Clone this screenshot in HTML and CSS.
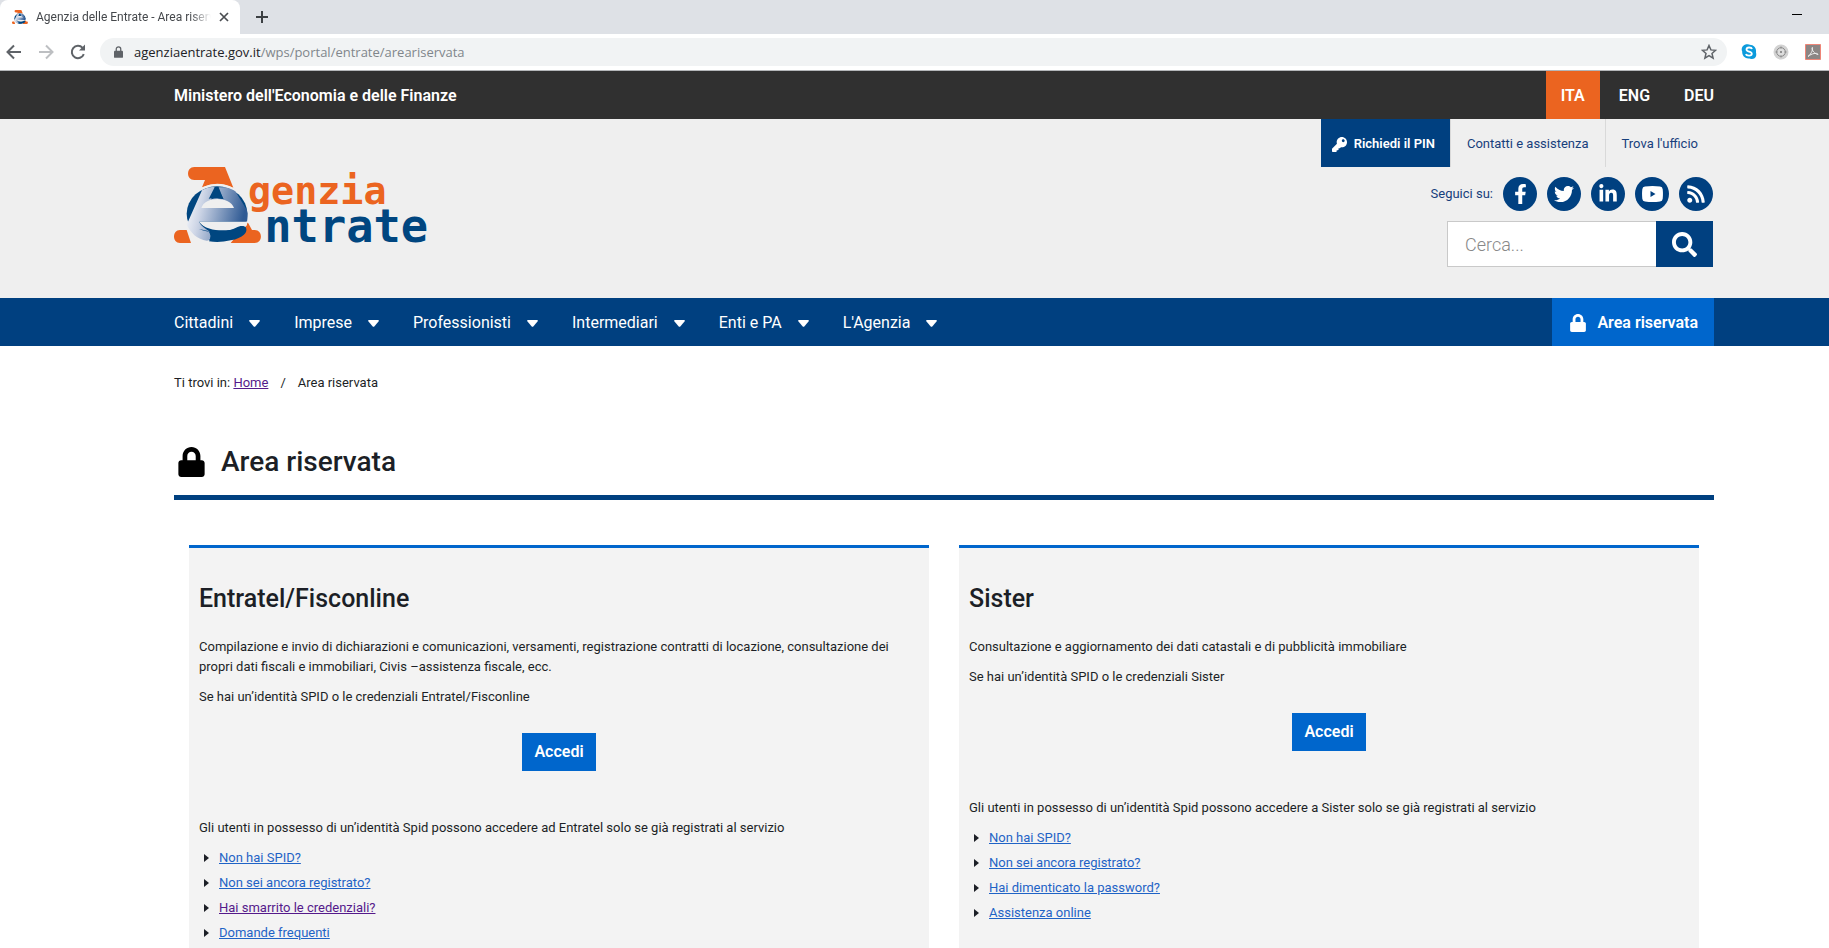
FILE: index.html
```html
<!DOCTYPE html>
<html lang="it">
<head>
<meta charset="utf-8">
<meta name="viewport" content="width=device-width, initial-scale=1">
<title>Agenzia delle Entrate - Area riservata</title>
<link rel="stylesheet" href="styles.css">
</head>
<body>
<svg class="defs" aria-hidden="true">
  <defs>
    <linearGradient id="shine" x1="0" y1="0" x2="1" y2="0.2">
      <stop offset="0" stop-color="#ffffff"/>
      <stop offset="0.3" stop-color="#cdd5e6"/>
      <stop offset="1" stop-color="#2f5a94"/>
    </linearGradient>
    <symbol id="mark" viewBox="42 51 262 228">
      <path fill="#eb6420" d="M103 51H195L220 113Q172 90 126 112L135 90H103C78 90 78 51 103 51Z"/>
      <path fill="#eb6420" d="M60 240H80L93 279H60C36 279 36 240 60 240ZM226 218H264L276 240H284C309 240 309 279 284 279H212L226 262Z"/>
      <ellipse cx="172" cy="190" rx="96" ry="88" fill="#efefef"/>
      <ellipse cx="171" cy="191" rx="91" ry="82" fill="#004680"/>
      <path fill="url(#shine)" d="M126 121C144 111 155 110 164 112L146 147C158 141 180 145 190 147L176 112C202 110 215 117 226 124L261 181C264 193 263 205 261 215H117C125 232 145 239 152 248C155 262 149 273 140 272C112 268 92 249 80 224Z"/>
      <path fill="#efefef" d="M124 174C134 138 210 138 222 174Z"/>
      <path fill="#004680" d="M172 112L191 148Q172 142 153 148Z"/>
      <path fill="#efefef" d="M117 215H262L259 228C246 226 236 234 226 237C197 243 140 246 117 215Z"/>
      <path fill="#004680" d="M117 237C145 251 198 249 228 233C239 227 249 226 257 231C266 246 249 265 212 271Q178 279 147 274Q157 257 145 243Z"/>
    </symbol>
    <symbol id="lock" viewBox="0 0 448 512"><path d="M400 224h-24v-72C376 68.200 307.800 0 224 0S72 68.200 72 152v72H48c-26.500 0-48 21.500-48 48v192c0 26.500 21.500 48 48 48h352c26.500 0 48-21.500 48-48V272c0-26.500-21.500-48-48-48zm-104 0H152v-72c0-39.700 32.300-72 72-72s72 32.300 72 72v72z"/></symbol>
    <symbol id="caret" viewBox="0 0 11 7"><path d="M1 0h9q1.500 0.300 0.500 1.500L6.500 6.200q-1 1-2 0L0.500 1.500Q-0.500 0.300 1 0z"/></symbol>
  </defs>
</svg>

<div class="browser">
  <div class="tabs">
    <div class="tab">
      <svg class="favicon" aria-hidden="true"><use href="#mark"/></svg>
      <span class="tab-title">Agenzia delle Entrate - Area riservata</span>
      <button class="tab-close" type="button" aria-label="Chiudi scheda"><svg viewBox="0 0 10 10" width="10" height="10"><path d="M1 1l8 8M9 1l-8 8" stroke="#4a4d51" stroke-width="1.700"/></svg></button>
    </div>
    <button class="tab-new" type="button" aria-label="Nuova scheda"><svg viewBox="0 0 12 12" width="12" height="12"><path d="M6 0v12M0 6h12" stroke="#3c4043" stroke-width="2"/></svg></button>
    <button class="minimize" type="button" aria-label="Riduci a icona"><svg viewBox="0 0 10 1" width="10" height="1"><path d="M0 0h10v1H0z" fill="#000"/></svg></button>
  </div>
  <div class="toolbar">
    <button type="button" aria-label="Indietro"><svg viewBox="0 0 16 16" width="16" height="16"><path d="M15 8H2M8 1.500L1.500 8 8 14.500" fill="none" stroke="#5f6368" stroke-width="2"/></svg></button>
    <button type="button" aria-label="Avanti"><svg viewBox="0 0 16 16" width="16" height="16"><path d="M1 8h13M8 1.500L14.500 8 8 14.500" fill="none" stroke="#bdbfc2" stroke-width="2"/></svg></button>
    <button type="button" aria-label="Ricarica"><svg viewBox="0 0 16 16" width="16" height="16"><path d="M13.800 10.200A6.200 6.200 0 1 1 12.600 3.800" fill="none" stroke="#5f6368" stroke-width="2"/><path d="M15 0.500v6H9z" fill="#5f6368"/></svg></button>
    <div class="address">
      <svg class="address-lock" viewBox="0 0 10 13" width="9" height="12" aria-hidden="true"><path d="M1 5h8q1 0 1 1v6q0 1-1 1H1q-1 0-1-1V6q0-1 1-1z" fill="#5f6368"/><path d="M2.500 6V3.200a2.500 2.500 0 0 1 5 0V6" fill="none" stroke="#5f6368" stroke-width="1.400"/></svg>
      <div class="url" role="textbox" contenteditable="true" spellcheck="false" aria-label="Indirizzo"><span class="url-host">agenziaentrate.gov.it</span>/wps/portal/entrate/areariservata</div>
      <button type="button" aria-label="Aggiungi ai preferiti"><svg viewBox="0 0 16 16" width="16" height="16"><path d="M8 1.500l1.900 4.400 4.700.4-3.600 3.100 1.100 4.700L8 11.600l-4.100 2.500L5 9.400 1.400 6.300l4.700-.4z" fill="none" stroke="#5f6368" stroke-width="1.500"/></svg></button>
    </div>
    <div class="extensions">
      <button type="button" aria-label="Skype"><svg viewBox="0 0 16 16" width="16" height="16"><path d="M4.500 0.500C7 0 8 1 10 1c4 0.500 5.500 4 5 7.500 1 3-0.500 6.500-4 6.500-1.500 0-2-0.500-3.500-0.500C3 14 1 11 1.200 7.500 0 5 1 1.500 4.500 0.500z" fill="#0c9bdc"/><path d="M11 5C10.500 3 5.500 2.800 5.500 5.500 5.500 8.200 10.800 7 10.800 9.700 10.800 12.300 5.500 12 5 10" fill="none" stroke="#fff" stroke-width="1.800"/></svg></button>
      <button type="button" aria-label="Estensione"><svg viewBox="0 0 16 16" width="16" height="16"><circle cx="8" cy="8" r="7.500" fill="#d2d2d2"/><circle cx="8" cy="8" r="4.300" fill="#ddd" stroke="#8a8a8a"/><circle cx="8" cy="8" r="1" fill="#777"/><path d="M8 2.500v2M8 11.500v2M2.500 8h2M11.500 8h2" stroke="#8a8a8a"/></svg></button>
      <button type="button" aria-label="Adobe Acrobat"><svg viewBox="0 0 16 16" width="16" height="16"><path d="M.5.500h15v15H.5z" fill="#8b8584" stroke="#ee8577"/><path d="M3 12.500C5 11 8 7 7.500 3.500 6 3 7.500 9.500 13 10.500 13 8.500 7 9 3 12.500z" fill="none" stroke="#eee"/></svg></button>
    </div>
  </div>
</div>

<div class="ministry">
  <div class="wrap bar">
    <a class="ministry-name" href="#">Ministero dell'Economia e delle Finanze</a>
    <nav class="langs" aria-label="Lingua"><a class="lang-active" href="#">ITA</a><a href="#">ENG</a><a href="#">DEU</a></nav>
  </div>
</div>

<header class="header">
  <div class="wrap header-row">
    <a class="logo" href="#" aria-label="Agenzia Entrate">
      <svg viewBox="42 51 756 228" width="252" height="76">
        <use href="#mark" x="42" y="51" width="262" height="228"/>
        <text class="logo-text logo-top" x="264" y="163">genzia</text>
        <text class="logo-text logo-bottom" x="313" y="277">ntrate</text>
      </svg>
    </a>
    <div class="tools">
      <nav class="quick" aria-label="Servizi">
        <a class="pin" href="#"><svg viewBox="0 0 512 512" width="15" height="15" fill="currentColor" aria-hidden="true"><path d="M512 176.001C512 273.203 433.202 352 336 352c-11.220 0-22.190-1.062-32.827-3.069l-24.012 27.014A23.999 23.999 0 0 1 261.223 384H224v40c0 13.255-10.745 24-24 24h-40v40c0 13.255-10.745 24-24 24H24c-13.255 0-24-10.745-24-24v-78.059c0-6.365 2.529-12.470 7.029-16.971l161.802-161.802C163.108 213.814 160 195.271 160 176 160 78.798 238.797.001 335.999 0 433.488-.001 512 78.511 512 176.001zM336 128c0 26.510 21.490 48 48 48s48-21.490 48-48-21.490-48-48-48-48 21.490-48 48z"/></svg>Richiedi il PIN</a>
        <a href="#">Contatti e assistenza</a>
        <a href="#">Trova l'ufficio</a>
      </nav>
      <div class="social">
        <span>Seguici su:</span>
        <a href="#" aria-label="Facebook"><svg viewBox="0 0 320 512" width="13" height="20"><path d="M279.140 288l14.220-92.660h-88.910v-60.130c0-25.350 12.420-50.060 52.240-50.060h40.420V6.260S260.430 0 225.360 0c-73.220 0-121.080 44.380-121.080 124.720v70.620H22.890V288h81.390v224h100.170V288z"/></svg></a>
        <a href="#" aria-label="Twitter"><svg viewBox="0 0 512 512" width="20" height="20"><path d="M459.370 151.716c.325 4.548.325 9.097.325 13.645 0 138.720-105.583 298.558-298.558 298.558-59.452 0-114.680-17.219-161.137-47.106 8.447.974 16.568 1.299 25.340 1.299 49.055 0 94.213-16.568 130.274-44.832-46.132-.975-84.792-31.188-98.112-72.772 6.498.974 12.995 1.624 19.818 1.624 9.421 0 18.843-1.300 27.614-3.573-48.081-9.747-84.143-51.980-84.143-102.985v-1.299c13.969 7.797 30.214 12.670 47.431 13.319-28.264-18.843-46.781-51.005-46.781-87.391 0-19.492 5.197-37.360 14.294-52.954 51.655 63.675 129.300 105.258 216.365 109.807-1.624-7.797-2.599-15.918-2.599-24.040 0-57.828 46.782-104.934 104.934-104.934 30.213 0 57.502 12.670 76.670 33.137 23.715-4.548 46.456-13.320 66.599-25.340-7.798 24.366-24.366 44.833-46.132 57.827 21.117-2.273 41.584-8.122 60.426-16.243-14.292 20.791-32.161 39.308-52.628 54.253z"/></svg></a>
        <a href="#" aria-label="LinkedIn"><svg viewBox="0 0 448 512" width="18" height="20"><path d="M100.280 448H7.400V148.900h92.880zM53.790 108.100C24.090 108.100 0 83.500 0 53.800a53.790 53.790 0 0 1 107.580 0c0 29.700-24.100 54.300-53.790 54.300zM447.900 448h-92.680V302.400c0-34.700-.7-79.200-48.290-79.200-48.290 0-55.690 37.700-55.690 76.700V448h-92.780V148.900h89.080v40.800h1.300c12.400-23.500 42.690-48.300 87.880-48.300 94 0 111.280 61.900 111.280 142.300V448z"/></svg></a>
        <a href="#" aria-label="YouTube"><svg viewBox="0 0 21 16" width="21" height="16"><path fill-rule="evenodd" d="M3 .5Q10.500-.5 18 .5q2.500.3 2.700 2.700.5 4.800 0 9.600-.2 2.400-2.700 2.700-7.500 1-15 0Q.5 15.200.3 12.800q-.5-4.800 0-9.600Q.5.800 3 .5zM8.500 5v6l5-3z"/></svg></a>
        <a href="#" aria-label="RSS"><svg viewBox="0 0 448 512" width="18" height="20"><path d="M128.081 415.959c0 35.369-28.672 64.041-64.041 64.041S0 451.328 0 415.959s28.672-64.041 64.041-64.041 64.040 28.673 64.040 64.041zm175.660 47.250c-8.354-154.600-132.185-278.587-286.950-286.950C7.656 175.765 0 183.105 0 192.253v48.069c0 8.415 6.490 15.472 14.887 16.018 111.832 7.284 201.473 96.702 208.772 208.772.547 8.397 7.604 14.887 16.018 14.887h48.069c9.149.001 16.489-7.655 15.995-16.790zm144.249.288C439.596 229.677 251.465 40.445 16.503 32.010 7.473 31.686 0 38.981 0 48.016v48.068c0 8.625 6.835 15.645 15.453 15.999 191.179 7.839 344.627 161.316 352.465 352.465.353 8.618 7.373 15.453 15.999 15.453h48.068c9.034-.001 16.329-7.474 16.005-16.504z"/></svg></a>
      </div>
      <form class="search">
        <input type="search" placeholder="Cerca..." aria-label="Cerca">
        <button type="button" aria-label="Avvia ricerca"><svg viewBox="0 0 512 512" width="25" height="25" fill="#fff"><path d="M505 442.700L405.300 343c-4.500-4.500-10.600-7-17-7H372c27.600-35.300 44-79.700 44-128C416 93.100 322.900 0 208 0S0 93.100 0 208s93.100 208 208 208c48.300 0 92.700-16.400 128-44v16.300c0 6.400 2.500 12.500 7 17l99.700 99.700c9.400 9.400 24.600 9.400 33.900 0l28.300-28.300c9.400-9.400 9.400-24.600.1-34zM208 336c-70.700 0-128-57.200-128-128 0-70.700 57.200-128 128-128 70.700 0 128 57.200 128 128 0 70.700-57.200 128-128 128z"/></svg></button>
      </form>
    </div>
  </div>
</header>

<div class="mainnav">
  <div class="wrap bar">
    <nav class="menu" aria-label="Menu principale">
      <button type="button">Cittadini<svg class="caret"><use href="#caret"/></svg></button>
      <button type="button">Imprese<svg class="caret"><use href="#caret"/></svg></button>
      <button type="button">Professionisti<svg class="caret"><use href="#caret"/></svg></button>
      <button type="button">Intermediari<svg class="caret"><use href="#caret"/></svg></button>
      <button type="button">Enti e PA<svg class="caret"><use href="#caret"/></svg></button>
      <button type="button">L'Agenzia<svg class="caret"><use href="#caret"/></svg></button>
    </nav>
    <a class="reserved" href="#"><svg width="16" height="18" aria-hidden="true"><use href="#lock"/></svg>Area riservata</a>
  </div>
</div>

<main class="wrap">
  <nav class="crumbs" aria-label="Percorso">Ti trovi in: <a class="visited" href="#">Home</a><span class="slash">/</span>Area riservata</nav>
  <h1 class="title"><svg width="27" height="30" aria-hidden="true"><use href="#lock"/></svg>Area riservata</h1>
  <div class="cards">
    <section class="card">
      <h2>Entratel/Fisconline</h2>
      <p>Compilazione e invio di dichiarazioni e comunicazioni, versamenti, registrazione contratti di locazione, consultazione dei propri dati fiscali e immobiliari, Civis –assistenza fiscale, ecc.</p>
      <p>Se hai un’identità SPID o le credenziali Entratel/Fisconline</p>
      <a class="login" href="#">Accedi</a>
      <p>Gli utenti in possesso di un’identità Spid possono accedere ad Entratel solo se già registrati al servizio</p>
      <ul>
        <li><a href="#">Non hai SPID?</a></li>
        <li><a href="#">Non sei ancora registrato?</a></li>
        <li><a class="visited" href="#">Hai smarrito le credenziali?</a></li>
        <li><a href="#">Domande frequenti</a></li>
      </ul>
    </section>
    <section class="card">
      <h2>Sister</h2>
      <p>Consultazione e aggiornamento dei dati catastali e di pubblicità immobiliare</p>
      <p>Se hai un’identità SPID o le credenziali Sister</p>
      <a class="login" href="#">Accedi</a>
      <p>Gli utenti in possesso di un’identità Spid possono accedere a Sister solo se già registrati al servizio</p>
      <ul>
        <li><a href="#">Non hai SPID?</a></li>
        <li><a href="#">Non sei ancora registrato?</a></li>
        <li><a href="#">Hai dimenticato la password?</a></li>
        <li><a href="#">Assistenza online</a></li>
      </ul>
    </section>
  </div>
</main>
</body>
</html>
```
FILE: styles.css
```css
* { box-sizing: border-box; }
html { overflow: hidden; }
body {
  margin: 0;
  background: #fff;
  color: #1c1f26;
  font: 13px/20px Roboto, "Open Sans", sans-serif;
  height: 100vh;
  overflow: hidden;
}
a { color: inherit; text-decoration: none; }
button { border: 0; padding: 0; background: none; font: inherit; color: inherit; }
svg { display: block; flex: none; }
.defs { position: absolute; width: 0; height: 0; }
.wrap { padding: 0 115px 0 174px; }
.bar { display: flex; justify-content: space-between; height: 48px; align-items: stretch; }

/* Browser window */
.browser { font-size: 12px; border-bottom: 1px solid #b4b6b9; }
.tabs { display: flex; height: 34px; background: #dee1e6; align-items: center; padding-right: 27px; }
.tab { display: flex; align-items: center; width: 240px; height: 34px; padding: 0 11px 0 12px; background: #fff; border-radius: 8px 8px 0 0; }
.favicon { width: 16px; height: 14px; margin-right: 8px; }
.tab-title {
  flex: 1; overflow: hidden; white-space: nowrap; color: #45484c;
  -webkit-mask-image: linear-gradient(to right, #000 88%, transparent);
  mask-image: linear-gradient(to right, #000 88%, transparent);
}
.tab-close { margin-left: 8px; }
.tab-new { margin-left: 16px; }
.minimize { margin-left: auto; padding-bottom: 6px; }
.toolbar { display: flex; align-items: center; gap: 16px; height: 36px; padding: 0 8px 0 6px; }
.address { flex: 1; display: flex; align-items: center; height: 28px; margin-left: -2px; padding: 0 10px 0 14px; border-radius: 14px; background: #f1f3f4; }
.url { flex: 1; margin-left: 11px; font-family: "Open Sans", sans-serif; font-size: 13px; color: #80868b; outline: 0; }
.url-host { color: #202124; }
.extensions { display: flex; gap: 16px; margin-left: -2px; }

/* Ministry bar */
.ministry { background: #303030; color: #fff; font-size: 16px; font-weight: 600; }
.ministry-name { align-self: center; padding-top: 2px; }
.langs { display: flex; gap: 4px; }
.langs a { display: flex; align-items: center; padding: 2px 15px 0; }
.langs .lang-active { background: #eb6420; }
.langs a:last-child { padding-right: 0; }

/* Header */
.header { background: #efefef; color: #17407c; }
.header-row { display: flex; justify-content: space-between; height: 179px; }
.logo { padding-top: 48px; }
.logo svg { overflow: visible; }
.logo-text { font-family: "DejaVu Sans Mono", "Liberation Mono", monospace; font-weight: 700; }
.logo-top { font-size: 115px; fill: #eb6420; }
.logo-bottom { font-size: 136px; fill: #004680; }
.tools { display: flex; flex-direction: column; align-items: flex-end; gap: 10px; }
.quick { display: flex; height: 48px; }
.quick a { display: flex; align-items: center; padding: 2px 16px 0; border-left: 1px solid #d9d9d9; }
.quick .pin { gap: 7px; padding: 2px 15px 0 11px; border: 0; background: #004080; color: #fff; font-weight: 600; }
.social { display: flex; align-items: center; gap: 10px; padding-right: 1px; }
.social a { display: flex; align-items: center; justify-content: center; width: 34px; height: 34px; border-radius: 50%; background: #004080; }
.social svg { fill: #fff; }
.search { display: flex; height: 46px; margin-right: 1px; }
.search input { width: 209px; padding: 2px 17px 0; border: 1px solid #c9c9c9; border-right: 0; border-radius: 0; background: #fff; font: 300 18px/24px Roboto, sans-serif; }
.search input::placeholder { color: #888; opacity: 1; }
.search button { display: flex; align-items: center; justify-content: center; width: 57px; background: #004080; }

/* Main navigation */
.mainnav { background: #004080; color: #fff; font-size: 16px; }
.menu { display: flex; gap: 34px; }
.menu button { display: flex; align-items: center; gap: 16px; padding-top: 2px; }
.caret { width: 11px; height: 7px; fill: #fff; }
.reserved { display: flex; align-items: center; gap: 11px; padding: 2px 16px 0 18px; background: #0066cc; font-weight: 600; }
.reserved svg { fill: #fff; }

/* Content */
.crumbs { padding-top: 27px; }
.visited { color: #551a8b; text-decoration: underline; }
.slash { padding: 0 12px; }
.title { display: flex; align-items: center; gap: 16px; margin: 38px 0 0; padding: 12px 0 14px 4px; border-bottom: 5px solid #004080; font-size: 28px; line-height: 38px; font-weight: 500; }
.title svg { fill: #000; }
.cards { display: grid; grid-template-columns: 1fr 1fr; gap: 30px; padding: 45px 15px 0; }
.card { padding: 35px 10px 16px; border-top: 3px solid #0066cc; background: #f3f3f3; }
.card h2 { margin: 0 0 22px; font-size: 25px; line-height: 32px; font-weight: 500; }
.card p { margin: 0 0 10px; }
.login { display: block; width: max-content; margin: 26px auto 47px; padding: 8px 12px; background: #0066cc; color: #fff; font-size: 16px; line-height: 22px; font-weight: 600; }
.card ul { display: grid; gap: 5px; margin: 0; padding: 0; list-style: none; }
.card li { display: flex; align-items: center; gap: 10px; padding-left: 5px; }
.card li::before { content: ""; border: solid transparent; border-width: 4px 0 4px 5px; border-left-color: #1c1f26; }
.card li a { color: #1f63c6; text-decoration: underline; }
.card li .visited { color: #551a8b; }
```
